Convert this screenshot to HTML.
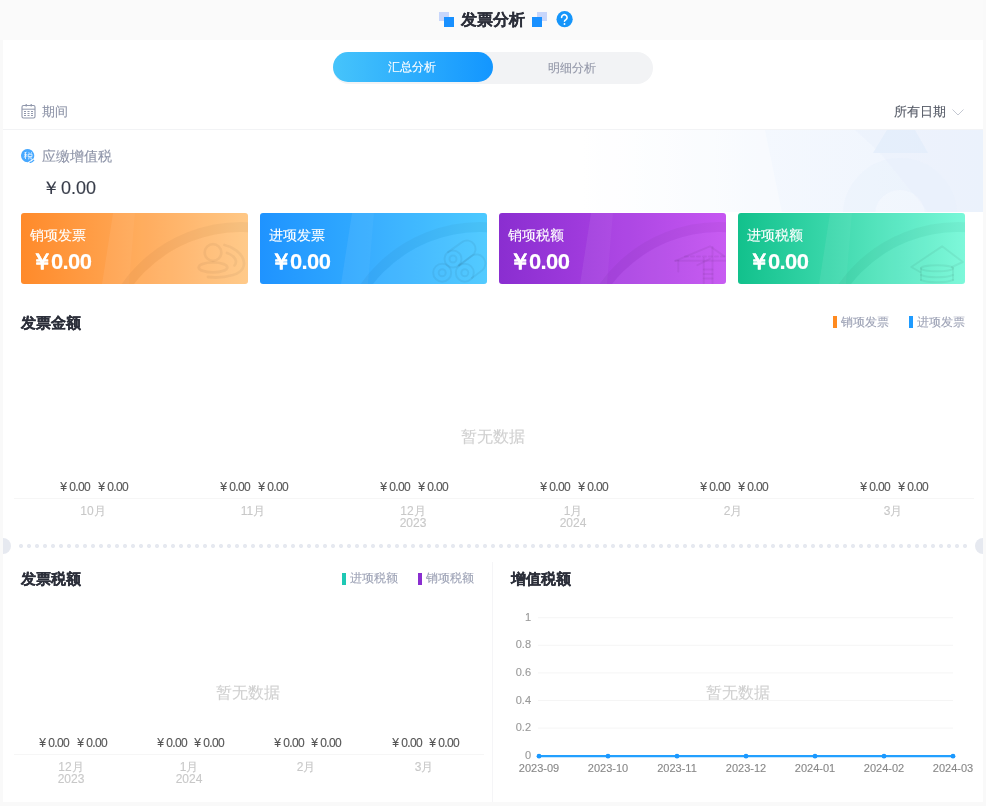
<!DOCTYPE html>
<html><head><meta charset="utf-8">
<style>
*{box-sizing:border-box;margin:0;padding:0}
html,body{width:986px;height:806px;overflow:hidden;background:#f9f9f9;font-family:"Liberation Sans",sans-serif}
.a{position:absolute;white-space:nowrap}
#hdr{left:0;top:0;width:983px;height:40px;background:#fafafa}
#panel{left:3px;top:40px;width:980px;height:762px;background:#fff}
.t{line-height:1;will-change:transform;-webkit-text-stroke:0.12px currentColor}
.bt{-webkit-text-stroke:0.2px currentColor}
.vl{font-size:12px;color:#555}
.vl i{font-style:normal;letter-spacing:-0.7px;margin-left:2.5px}
.ml{font-size:12px;color:#c8c8c8}
.yl{font-size:11px;color:#999}
.xl{font-size:11px;color:#888}

</style></head><body>
<div class="a" id="hdr"></div>
<div class="a" id="panel"></div>

<!-- header title -->
<div class="a" style="left:439px;top:12px;width:10px;height:9px;background:#c7d6fb"></div>
<div class="a" style="left:444px;top:17px;width:10px;height:10px;background:#1890ff"></div>
<div class="a t bt" style="left:461px;top:12px;font-size:16px;font-weight:bold;color:#2c2f3a">发票分析</div>
<div class="a" style="left:537px;top:12px;width:10px;height:9px;background:#c7d6fb"></div>
<div class="a" style="left:532px;top:17px;width:10px;height:10px;background:#1890ff"></div>
<svg class="a" style="left:556px;top:11px" width="17" height="17" viewBox="0 0 17 17"><circle cx="8.6" cy="8.2" r="8.1" fill="#1595fa"/>
<path d="M5.6,6.5 A2.75,2.75 0 1 1 9.9,8.7 Q8.5,9.3 8.5,10.2" fill="none" stroke="#fff" stroke-width="1.6" stroke-linecap="round"/><circle cx="8.5" cy="12.95" r="0.95" fill="#fff"/></svg>

<!-- tabs -->
<div class="a" style="left:333px;top:52px;width:320px;height:32px;border-radius:16px;background:#f2f3f5"></div>
<div class="a" style="left:333px;top:52px;width:160px;height:30px;border-radius:15px;background:linear-gradient(90deg,#46c4fb,#1396ff)"></div>
<div class="a t" style="left:388px;top:61px;font-size:12px;color:#fff">汇总分析</div>
<div class="a t" style="left:548px;top:62px;font-size:12px;color:#9397a8">明细分析</div>

<!-- period -->
<svg class="a" style="left:21px;top:104px" width="15" height="15" viewBox="0 0 15 15">
<rect x="1" y="1.5" width="13" height="12.5" rx="1.5" fill="none" stroke="#9097ab" stroke-width="1.1"/>
<line x1="1" y1="5.2" x2="14" y2="5.2" stroke="#9097ab" stroke-width="1"/>
<line x1="5.2" y1="0" x2="5.2" y2="2.5" stroke="#9097ab" stroke-width="1.2"/>
<line x1="10.2" y1="0" x2="10.2" y2="2.5" stroke="#9097ab" stroke-width="1.2"/>
<g fill="#9097ab"><rect x="3" y="7" width="2" height="1"/><rect x="6.5" y="7" width="2" height="1"/><rect x="10" y="7" width="2" height="1"/>
<rect x="3" y="9" width="2" height="1"/><rect x="6.5" y="9" width="2" height="1"/><rect x="10" y="9" width="2" height="1"/>
<rect x="3" y="11" width="2" height="1"/><rect x="6.5" y="11" width="2" height="1"/><rect x="10" y="11" width="2" height="1"/></g>
</svg>
<div class="a t" style="left:42px;top:105px;font-size:13px;color:#8e94a8">期间</div>
<div class="a t" style="left:894px;top:105px;font-size:13px;color:#555a66">所有日期</div>
<svg class="a" style="left:952px;top:109px" width="12" height="7" viewBox="0 0 12 7"><polyline points="0.5,0.5 6,6 11.5,0.5" fill="none" stroke="#c4c8d2" stroke-width="1"/></svg>
<div class="a" style="left:3px;top:129px;width:980px;height:1px;background:#f2f3f5"></div>

<!-- tax decoration -->
<svg class="a" style="left:583px;top:130px" width="400" height="82" viewBox="0 0 400 82">
<defs><linearGradient id="tg" x1="0" x2="1" y1="0" y2="0"><stop offset="0" stop-color="#f4f8fe" stop-opacity="0"/><stop offset="0.45" stop-color="#f4f8fe" stop-opacity="1"/><stop offset="1" stop-color="#eef4fd"/></linearGradient>
<clipPath id="tc"><rect width="400" height="82"/></clipPath></defs>
<rect width="400" height="82" fill="url(#tg)"/>
<g clip-path="url(#tc)">
<polygon points="0,0 182,0 199,82 0,82" fill="#fff" fill-opacity="0.35"/>
<polygon points="272,0 400,0 400,82 345,82 297,23" fill="#e3edfb" fill-opacity="0.25"/>
<polygon points="304,0 332,0 345,23 290,23" fill="#e1ecfb" fill-opacity="0.7"/>
<circle cx="317" cy="85" r="41" fill="none" stroke="#e6effc" stroke-opacity="0.3" stroke-width="32"/>
<circle cx="317" cy="85" r="25" fill="#fff" fill-opacity="0.12"/>
</g></svg>

<!-- tax -->
<svg class="a" style="left:21px;top:148px" width="14" height="15" viewBox="0 0 14 15">
<path d="M6.8,14.2 A6.6,6.6 0 1 1 12.6,10.4" fill="#46a8ff"/>
<path d="M8.6,14.6 C10.5,14.2 12,13.2 13,11.8" fill="none" stroke="#46a8ff" stroke-width="1.3"/>
<g fill="none" stroke="#fff" stroke-width="0.9" stroke-opacity="0.85">
<path d="M3.3,5 L5.6,4.2 M4.5,4.4 L4.5,11 M3,6.8 L6,6.8 M4.5,7.2 L3.2,9.6 M4.6,7.4 L5.8,8.6"/>
<path d="M7.2,6.2 L11,6.2 L11,8.6 L7.2,8.6 Z M8.3,8.6 L7.6,11.4 M9.9,8.6 L9.9,11 L11.3,11 M7.8,4.3 L8.3,5.6 M10.6,4.3 L10.1,5.6"/>
</g></svg>
<div class="a t" style="left:42px;top:149px;font-size:14px;color:#8e94a8">应缴增值税</div>
<div class="a t" style="left:42px;top:179px;font-size:18px;color:#353a47"><span style="margin-right:1px">￥</span>0.00</div>

<!-- cards -->
<div class="a" style="left:21px;top:213px;width:227px;height:71px;border-radius:3px;background:linear-gradient(90deg,#ff8a2a,#ffc682)"></div>
<div class="a" style="left:260px;top:213px;width:227px;height:71px;border-radius:3px;background:linear-gradient(90deg,#1f93ff,#46c7ff)"></div>
<div class="a" style="left:499px;top:213px;width:227px;height:71px;border-radius:3px;background:linear-gradient(90deg,#8a2ed0,#c450f2)"></div>
<div class="a" style="left:738px;top:213px;width:227px;height:71px;border-radius:3px;background:linear-gradient(90deg,#12c18c,#74f8d8)"></div>
<!-- DECO -->
<svg class="a" style="left:21px;top:213px" width="227" height="71" viewBox="0 0 227 71">
<defs><clipPath id="c21"><rect width="227" height="71" rx="3"/></clipPath></defs>
<g clip-path="url(#c21)">
<polygon points="92,0 227,0 227,71 81,71" fill="#fff" fill-opacity="0.035"/>
<polygon points="92,0 114,0 108,71 81,71" fill="#fff" fill-opacity="0.04"/>
<circle cx="220" cy="155" r="136" fill="#fff" fill-opacity="0.04"/>
<circle cx="220" cy="155" r="141" fill="none" stroke="#000" stroke-opacity="0.035" stroke-width="10"/>
<g fill="none" stroke="#000" stroke-opacity="0.045" stroke-width="2.8" stroke-linecap="round" stroke-linejoin="round"><circle cx="192" cy="39.5" r="8.3"/><ellipse cx="192" cy="54.4" rx="14.3" ry="5"/><path d="M203.5,32 C222,36 232,56 212,62 C205,64 195,65 187,64"/><path d="M206,40 C214,43 217,48 213.5,52.5"/></g>
</g></svg><svg class="a" style="left:260px;top:213px" width="227" height="71" viewBox="0 0 227 71">
<defs><clipPath id="c260"><rect width="227" height="71" rx="3"/></clipPath></defs>
<g clip-path="url(#c260)">
<polygon points="92,0 227,0 227,71 81,71" fill="#fff" fill-opacity="0.035"/>
<polygon points="92,0 114,0 108,71 81,71" fill="#fff" fill-opacity="0.04"/>
<circle cx="220" cy="155" r="136" fill="#fff" fill-opacity="0.04"/>
<circle cx="220" cy="155" r="141" fill="none" stroke="#000" stroke-opacity="0.035" stroke-width="10"/>
<g fill="none" stroke="#000" stroke-opacity="0.05" stroke-width="2" stroke-linecap="round" stroke-linejoin="round"><path d="M188.06,39.08 L202.06,29.08 A8.5,8.5 0 0 1 211.94,42.92 L199,52"/><circle cx="193" cy="46" r="8.5"/><circle cx="193" cy="46" r="3.5"/><path d="M199.2,52.7 L211.4,43 A9,9 0 0 1 222.6,57 L212,65"/><circle cx="182.2" cy="59.7" r="9"/><circle cx="182.2" cy="59.7" r="3.5"/><circle cx="204.8" cy="59.7" r="9"/><circle cx="204.8" cy="59.7" r="3.5"/></g>
</g></svg><svg class="a" style="left:499px;top:213px" width="227" height="71" viewBox="0 0 227 71">
<defs><clipPath id="c499"><rect width="227" height="71" rx="3"/></clipPath></defs>
<g clip-path="url(#c499)">
<polygon points="92,0 227,0 227,71 81,71" fill="#fff" fill-opacity="0.035"/>
<polygon points="92,0 114,0 108,71 81,71" fill="#fff" fill-opacity="0.04"/>
<circle cx="220" cy="155" r="136" fill="#fff" fill-opacity="0.04"/>
<circle cx="220" cy="155" r="141" fill="none" stroke="#000" stroke-opacity="0.035" stroke-width="10"/>
<g fill="none" stroke="#000" stroke-opacity="0.05" stroke-width="2" stroke-linecap="round" stroke-linejoin="round"><path d="M176.4,47.8 L211,33.3 L225.5,43.4"/><line x1="176.4" y1="47.8" x2="227" y2="47.8"/><line x1="186" y1="43.5" x2="227" y2="43.5" stroke-dasharray="3 3"/><line x1="179.3" y1="47.8" x2="179.3" y2="58.4"/><line x1="204.7" y1="45" x2="204.7" y2="71"/><line x1="213.5" y1="34" x2="213.5" y2="71"/><line x1="198.4" y1="52.2" x2="211" y2="45.9"/><line x1="204.7" y1="56.6" x2="213.5" y2="56.6"/><line x1="204.7" y1="61" x2="213.5" y2="61"/><line x1="204.7" y1="65.4" x2="213.5" y2="65.4"/></g>
</g></svg><svg class="a" style="left:738px;top:213px" width="227" height="71" viewBox="0 0 227 71">
<defs><clipPath id="c738"><rect width="227" height="71" rx="3"/></clipPath></defs>
<g clip-path="url(#c738)">
<polygon points="92,0 227,0 227,71 81,71" fill="#fff" fill-opacity="0.035"/>
<polygon points="92,0 114,0 108,71 81,71" fill="#fff" fill-opacity="0.04"/>
<circle cx="220" cy="155" r="136" fill="#fff" fill-opacity="0.04"/>
<circle cx="220" cy="155" r="141" fill="none" stroke="#000" stroke-opacity="0.035" stroke-width="10"/>
<g fill="none" stroke="#000" stroke-opacity="0.05" stroke-width="2" stroke-linecap="round" stroke-linejoin="round"><path d="M182,59 L173.3,54 L204.1,33.3 L224.9,49 L214,54"/><ellipse cx="199" cy="55.3" rx="16" ry="3"/><path d="M183,55.3 L183,67 M215,55.3 L215,67"/><path d="M183,62 C190,65 208,65 215,62"/><path d="M183,67 C190,70 208,70 215,67"/></g>
</g></svg>
<div class="a t" style="left:30px;top:228px;font-size:14px;color:#fff">销项发票</div>
<div class="a t" style="left:31px;top:251px;font-size:22px;font-weight:bold;color:#fff;letter-spacing:-0.6px"><span style="margin-right:-1.5px">￥</span>0.00</div>
<div class="a t" style="left:269px;top:228px;font-size:14px;color:#fff">进项发票</div>
<div class="a t" style="left:270px;top:251px;font-size:22px;font-weight:bold;color:#fff;letter-spacing:-0.6px"><span style="margin-right:-1.5px">￥</span>0.00</div>
<div class="a t" style="left:508px;top:228px;font-size:14px;color:#fff">销项税额</div>
<div class="a t" style="left:509px;top:251px;font-size:22px;font-weight:bold;color:#fff;letter-spacing:-0.6px"><span style="margin-right:-1.5px">￥</span>0.00</div>
<div class="a t" style="left:747px;top:228px;font-size:14px;color:#fff">进项税额</div>
<div class="a t" style="left:748px;top:251px;font-size:22px;font-weight:bold;color:#fff;letter-spacing:-0.6px"><span style="margin-right:-1.5px">￥</span>0.00</div>

<!-- chart1 -->
<div class="a t bt" style="left:21px;top:315px;font-size:15px;font-weight:bold;color:#2c2f3a">发票金额</div>
<div class="a" style="left:833px;top:316px;width:4px;height:12px;background:#ff8a1f"></div>
<div class="a t" style="left:841px;top:316px;font-size:12px;color:#9ea3b6">销项发票</div>
<div class="a" style="left:909px;top:316px;width:4px;height:12px;background:#1e9bff"></div>
<div class="a t" style="left:917px;top:316px;font-size:12px;color:#9ea3b6">进项发票</div>
<div class="a t" style="left:461px;top:429px;font-size:16px;color:#d0d0d0">暂无数据</div>
<div class="a" style="left:14px;top:498px;width:960px;height:1px;background:#f6f6f6"></div>

<!-- divider -->
<div class="a" style="left:-5px;top:538px;width:16px;height:16px;border-radius:50%;background:#e6e9f0"></div>
<div class="a" style="left:975px;top:538px;width:16px;height:16px;border-radius:50%;background:#e6e9f0"></div>
<div class="a" style="left:17px;top:544px;width:952px;height:4px;background:radial-gradient(circle at 4px 2px,#e6e9f0 2px,transparent 2.2px) 0 0/8px 4px repeat-x"></div>
<div class="a" style="left:983px;top:0;width:3px;height:806px;background:#f9f9f9"></div>
<div class="a" style="left:0;top:40px;width:3px;height:766px;background:#f9f9f9"></div>

<!-- bottom left -->
<div class="a t bt" style="left:21px;top:571px;font-size:15px;font-weight:bold;color:#2c2f3a">发票税额</div>
<div class="a" style="left:342px;top:573px;width:4px;height:12px;background:#1ec8b4"></div>
<div class="a t" style="left:350px;top:572px;font-size:12px;color:#9ea3b6">进项税额</div>
<div class="a" style="left:418px;top:573px;width:4px;height:12px;background:#8a2ed0"></div>
<div class="a t" style="left:426px;top:572px;font-size:12px;color:#9ea3b6">销项税额</div>
<div class="a t" style="left:216px;top:685px;font-size:16px;color:#d0d0d0">暂无数据</div>
<div class="a" style="left:14px;top:754px;width:470px;height:1px;background:#f6f6f6"></div>
<div class="a" style="left:492px;top:562px;width:1px;height:240px;background:#f5f5f7"></div>

<!-- bottom right -->
<div class="a t bt" style="left:511px;top:571px;font-size:15px;font-weight:bold;color:#2c2f3a">增值税额</div>
<div class="a t" style="left:706px;top:685px;font-size:16px;color:#d0d0d0">暂无数据</div>

<!-- CHARTS -->
<svg class="a" style="left:0;top:0" width="986" height="806">
<line x1="538" y1="617.7" x2="953" y2="617.7" stroke="#f5f5f5" stroke-width="1"/>
<line x1="538" y1="645.3" x2="953" y2="645.3" stroke="#f5f5f5" stroke-width="1"/>
<line x1="538" y1="672.9" x2="953" y2="672.9" stroke="#f5f5f5" stroke-width="1"/>
<line x1="538" y1="700.5" x2="953" y2="700.5" stroke="#f5f5f5" stroke-width="1"/>
<line x1="538" y1="728.1" x2="953" y2="728.1" stroke="#f5f5f5" stroke-width="1"/>
<line x1="539" y1="756.2" x2="953" y2="756.2" stroke="#22a0ff" stroke-width="2.2"/>
<circle cx="539" cy="756.2" r="2.4" fill="#1a98ff"/>
<circle cx="608" cy="756.2" r="2.4" fill="#1a98ff"/>
<circle cx="677" cy="756.2" r="2.4" fill="#1a98ff"/>
<circle cx="746" cy="756.2" r="2.4" fill="#1a98ff"/>
<circle cx="815" cy="756.2" r="2.4" fill="#1a98ff"/>
<circle cx="884" cy="756.2" r="2.4" fill="#1a98ff"/>
<circle cx="953" cy="756.2" r="2.4" fill="#1a98ff"/>
</svg>
<div class="a t vl" style="left:55.3px;top:481px;width:40px;text-align:center">¥<i>0.00</i></div>
<div class="a t vl" style="left:92.7px;top:481px;width:40px;text-align:center">¥<i>0.00</i></div>
<div class="a t ml" style="left:62.6px;top:505px;width:60px;text-align:center">10月</div>
<div class="a t vl" style="left:215.3px;top:481px;width:40px;text-align:center">¥<i>0.00</i></div>
<div class="a t vl" style="left:252.7px;top:481px;width:40px;text-align:center">¥<i>0.00</i></div>
<div class="a t ml" style="left:222.6px;top:505px;width:60px;text-align:center">11月</div>
<div class="a t vl" style="left:375.3px;top:481px;width:40px;text-align:center">¥<i>0.00</i></div>
<div class="a t vl" style="left:412.7px;top:481px;width:40px;text-align:center">¥<i>0.00</i></div>
<div class="a t ml" style="left:382.6px;top:505px;width:60px;text-align:center">12月</div>
<div class="a t ml" style="left:382.6px;top:517px;width:60px;text-align:center">2023</div>
<div class="a t vl" style="left:535.3px;top:481px;width:40px;text-align:center">¥<i>0.00</i></div>
<div class="a t vl" style="left:572.7px;top:481px;width:40px;text-align:center">¥<i>0.00</i></div>
<div class="a t ml" style="left:542.6px;top:505px;width:60px;text-align:center">1月</div>
<div class="a t ml" style="left:542.6px;top:517px;width:60px;text-align:center">2024</div>
<div class="a t vl" style="left:695.3px;top:481px;width:40px;text-align:center">¥<i>0.00</i></div>
<div class="a t vl" style="left:732.7px;top:481px;width:40px;text-align:center">¥<i>0.00</i></div>
<div class="a t ml" style="left:702.6px;top:505px;width:60px;text-align:center">2月</div>
<div class="a t vl" style="left:855.3px;top:481px;width:40px;text-align:center">¥<i>0.00</i></div>
<div class="a t vl" style="left:892.7px;top:481px;width:40px;text-align:center">¥<i>0.00</i></div>
<div class="a t ml" style="left:862.6px;top:505px;width:60px;text-align:center">3月</div>
<div class="a t vl" style="left:34.0px;top:737px;width:40px;text-align:center">¥<i>0.00</i></div>
<div class="a t vl" style="left:71.5px;top:737px;width:40px;text-align:center">¥<i>0.00</i></div>
<div class="a t ml" style="left:41.4px;top:761px;width:60px;text-align:center">12月</div>
<div class="a t ml" style="left:41.4px;top:773px;width:60px;text-align:center">2023</div>
<div class="a t vl" style="left:151.6px;top:737px;width:40px;text-align:center">¥<i>0.00</i></div>
<div class="a t vl" style="left:188.9px;top:737px;width:40px;text-align:center">¥<i>0.00</i></div>
<div class="a t ml" style="left:158.8px;top:761px;width:60px;text-align:center">1月</div>
<div class="a t ml" style="left:158.8px;top:773px;width:60px;text-align:center">2024</div>
<div class="a t vl" style="left:269.1px;top:737px;width:40px;text-align:center">¥<i>0.00</i></div>
<div class="a t vl" style="left:306.4px;top:737px;width:40px;text-align:center">¥<i>0.00</i></div>
<div class="a t ml" style="left:276.4px;top:761px;width:60px;text-align:center">2月</div>
<div class="a t vl" style="left:386.6px;top:737px;width:40px;text-align:center">¥<i>0.00</i></div>
<div class="a t vl" style="left:423.9px;top:737px;width:40px;text-align:center">¥<i>0.00</i></div>
<div class="a t ml" style="left:393.8px;top:761px;width:60px;text-align:center">3月</div>
<div class="a t yl" style="left:471px;top:611.7px;width:60px;text-align:right">1</div>
<div class="a t yl" style="left:471px;top:639.3px;width:60px;text-align:right">0.8</div>
<div class="a t yl" style="left:471px;top:666.9px;width:60px;text-align:right">0.6</div>
<div class="a t yl" style="left:471px;top:694.5px;width:60px;text-align:right">0.4</div>
<div class="a t yl" style="left:471px;top:722.1px;width:60px;text-align:right">0.2</div>
<div class="a t yl" style="left:471px;top:749.7px;width:60px;text-align:right">0</div>
<div class="a t xl" style="left:509px;top:763px;width:60px;text-align:center">2023-09</div>
<div class="a t xl" style="left:578px;top:763px;width:60px;text-align:center">2023-10</div>
<div class="a t xl" style="left:647px;top:763px;width:60px;text-align:center">2023-11</div>
<div class="a t xl" style="left:716px;top:763px;width:60px;text-align:center">2023-12</div>
<div class="a t xl" style="left:785px;top:763px;width:60px;text-align:center">2024-01</div>
<div class="a t xl" style="left:854px;top:763px;width:60px;text-align:center">2024-02</div>
<div class="a t xl" style="left:923px;top:763px;width:60px;text-align:center">2024-03</div>

</body></html>
